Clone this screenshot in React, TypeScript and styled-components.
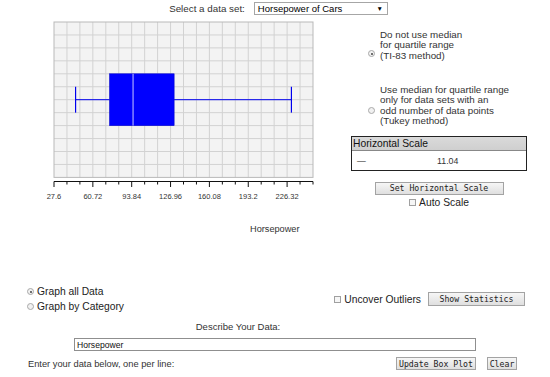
import styled, { createGlobalStyle } from 'styled-components';

const GlobalStyle = createGlobalStyle`
  body {
    margin: 0;
    background: #fff;
    color: #222;
    font-family: 'Liberation Sans', Arial, sans-serif;
  }
`;

const CELL = 12.95;
const COLS = 20;
const ROWS = 12;
const MIN = 27.6;
const STEP = 11.04;
const stats = { min: 46, q1: 75, median: 95, q3: 130, max: 230 };

const BoxPlot = () => {
  const x0 = 14;
  const y0 = 7;
  const w = COLS * CELL;
  const h = ROWS * CELL;
  const toX = (v: number) => x0 + ((v - MIN) / STEP) * CELL;
  const axisY = 166.5;
  const mid = y0 + 6 * CELL;
  const boxTop = y0 + 4 * CELL;
  const boxBottom = y0 + 8 * CELL;
  const capTop = y0 + 5 * CELL;
  const capBottom = y0 + 7 * CELL;

  return (
    <svg width="280" height="190" viewBox="0 0 280 190">
      <rect x={x0} y={y0} width={w} height={h} fill="#f3f3f3" />
      {Array.from({ length: COLS - 1 }, (_, i) => (
        <line key={'v' + i} x1={x0 + (i + 1) * CELL} x2={x0 + (i + 1) * CELL} y1={y0} y2={y0 + h} stroke="#d2d2d2" strokeWidth="1" />
      ))}
      {Array.from({ length: ROWS - 1 }, (_, i) => (
        <line key={'h' + i} x1={x0} x2={x0 + w} y1={y0 + (i + 1) * CELL} y2={y0 + (i + 1) * CELL} stroke="#d2d2d2" strokeWidth="1" />
      ))}
      <rect x={x0} y={y0} width={w} height={h} fill="none" stroke="#b9b9b9" strokeWidth="1" />

      <line x1={toX(stats.min)} x2={toX(stats.q1)} y1={mid} y2={mid} stroke="#0000ee" strokeWidth="1" />
      <line x1={toX(stats.q3)} x2={toX(stats.max)} y1={mid} y2={mid} stroke="#0000ee" strokeWidth="1" />
      <line x1={toX(stats.min)} x2={toX(stats.min)} y1={capTop} y2={capBottom} stroke="#0000ee" strokeWidth="1.2" />
      <line x1={toX(stats.max)} x2={toX(stats.max)} y1={capTop} y2={capBottom} stroke="#0000ee" strokeWidth="1.2" />
      <rect x={toX(stats.q1)} y={boxTop} width={toX(stats.q3) - toX(stats.q1)} height={boxBottom - boxTop} fill="#0000ff" stroke="#0000cc" strokeWidth="0.6" />
      <line x1={toX(stats.median)} x2={toX(stats.median)} y1={boxTop} y2={boxBottom} stroke="#c8c8ff" strokeWidth="1" />

      <line x1={x0} x2={x0 + w} y1={axisY} y2={axisY} stroke="#111" strokeWidth="1" />
      {Array.from({ length: COLS + 1 }, (_, i) => (
        <line key={'t' + i} x1={x0 + i * CELL} x2={x0 + i * CELL} y1={axisY} y2={axisY + (i % 3 === 0 ? 5.5 : 3)} stroke="#111" strokeWidth="1" />
      ))}
      {Array.from({ length: 7 }, (_, k) => (
        <text key={'l' + k} x={x0 + k * 3 * CELL} y={axisY + 17.5} fontSize="7.5" fill="#333" textAnchor="middle" fontFamily="'Liberation Sans', Arial, sans-serif">
          {parseFloat((MIN + k * 3 * STEP).toFixed(2)).toString()}
        </text>
      ))}
    </svg>
  );
};

const options = [
  { lines: ['Do not use median', 'for quartile range', '(TI-83 method)'], checked: true, mark: 20.5, gap: 0 },
  { lines: ['Use median for quartile range', 'only for data sets with an', 'odd number of data points', '(Tukey method)'], checked: false, mark: 22.5, gap: 23.5 },
];

const App = () => (
  <>
    <GlobalStyle />
    <Page>
      <TopBar>
        <span>Select a data set:</span>
        <Select>
          <span>Horsepower of Cars</span>
          <Arrow>▼</Arrow>
        </Select>
      </TopBar>

      <Main>
        <ChartColumn>
          <BoxPlot />
          <AxisTitle>Horsepower</AxisTitle>
        </ChartColumn>

        <SidePanel>
          <Options>
            {options.map((o) => (
              <OptionRow key={o.lines[0]} $gap={o.gap}>
                <RadioMark $checked={o.checked} $top={o.mark} />
                <OptionText>
                  {o.lines.map((l) => (
                    <div key={l}>{l}</div>
                  ))}
                </OptionText>
              </OptionRow>
            ))}
          </Options>

          <ScaleTable>
            <ScaleHead>Horizontal Scale</ScaleHead>
            <ScaleBody>
              <Dash>—</Dash>
              <ScaleValue>11.04</ScaleValue>
            </ScaleBody>
          </ScaleTable>

          <Button $w={129} $mt={10.5}>Set Horizontal Scale</Button>
          <CheckLabel $mt={2}>
            <CheckMark />
            Auto Scale
          </CheckLabel>
        </SidePanel>
      </Main>

      <ControlRow>
        <GraphModes>
          <ModeItem>
            <RadioMark $checked />
            Graph all Data
          </ModeItem>
          <ModeItem>
            <RadioMark $checked={false} />
            Graph by Category
          </ModeItem>
        </GraphModes>
        <OutlierGroup>
          <CheckLabel>
            <CheckMark />
            Uncover Outliers
          </CheckLabel>
          <Button $w={97}>Show Statistics</Button>
        </OutlierGroup>
      </ControlRow>

      <DescribeLabel>Describe Your Data:</DescribeLabel>
      <DescribeInput defaultValue="Horsepower" />

      <EntryRow>
        <span>Enter your data below, one per line:</span>
        <EntryButtons>
          <Button $w={80}>Update Box Plot</Button>
          <Button $w={30}>Clear</Button>
        </EntryButtons>
      </EntryRow>
    </Page>
  </>
);

const Page = styled.div`
  width: 550px;
  height: 377px;
  overflow: hidden;
  font-size: 10px;
`;

const TopBar = styled.div`
  display: flex;
  justify-content: center;
  align-items: center;
  gap: 9px;
  height: 15px;
  padding-top: 2px;
  margin-left: 7px;
  box-sizing: border-box;
  font-size: 9.8px;
  color: #333;
`;

const Select = styled.div`
  display: flex;
  justify-content: space-between;
  align-items: center;
  width: 134px;
  height: 13px;
  box-sizing: border-box;
  padding: 0 4px 0 3px;
  border: 1px solid #a6a6a6;
  font-size: 9.5px;
  color: #000;
`;

const Arrow = styled.span`
  font-size: 6.5px;
`;

const Main = styled.div`
  display: flex;
  height: 269.5px;
`;

const ChartColumn = styled.div`
  width: 300px;
  padding-left: 40px;
  display: flex;
  flex-direction: column;
`;

const AxisTitle = styled.div`
  margin-top: 19px;
  padding-left: 210px;
  font-size: 9.2px;
  line-height: 11px;
  color: #333;
`;

const SidePanel = styled.div`
  width: 176px;
  margin-left: 11px;
  display: flex;
  flex-direction: column;
  align-items: center;
`;

const Options = styled.div`
  align-self: stretch;
  padding: 14.75px 0 0 17px;
`;

const OptionRow = styled.div<{ $gap: number }>`
  display: flex;
  gap: 5px;
  margin-top: ${(p) => p.$gap}px;
`;

const RadioMark = styled.span<{ $checked: boolean; $top?: number }>`
  position: relative;
  flex: none;
  width: 7px;
  height: 7px;
  margin-top: ${(p) => p.$top ?? 0}px;
  box-sizing: border-box;
  border: 1px solid #a9a9a9;
  border-radius: 50%;
  background: #f1f1f1;

  &::after {
    content: '';
    display: ${(p) => (p.$checked ? 'block' : 'none')};
    position: absolute;
    left: 1.5px;
    top: 1.5px;
    width: 2px;
    height: 2px;
    border-radius: 50%;
    background: #444;
  }
`;

const OptionText = styled.div`
  font-size: 9.8px;
  line-height: 10.5px;
  color: #333;
`;

const ScaleTable = styled.div`
  align-self: stretch;
  margin-top: 9.25px;
  border: 1px solid #222;
`;

const ScaleHead = styled.div`
  height: 13px;
  line-height: 13px;
  padding-left: 1px;
  font-size: 10.3px;
  color: #111;
  background: linear-gradient(#dadada, #cfcfcf);
  border-bottom: 1px solid #888;
`;

const ScaleBody = styled.div`
  display: flex;
  align-items: center;
  height: 19px;
  font-size: 8.8px;
  color: #333;
`;

const Dash = styled.span`
  width: 80px;
  padding-left: 5px;
  color: #111;
`;

const ScaleValue = styled.span``;

const Button = styled.div<{ $w: number; $mt?: number }>`
  display: flex;
  justify-content: center;
  align-items: center;
  width: ${(p) => p.$w}px;
  height: 13.5px;
  margin-top: ${(p) => p.$mt ?? 0}px;
  box-sizing: border-box;
  border: 1px solid #a3a3a3;
  background: linear-gradient(#f6f6f6, #dfdfdf);
  font-family: 'DejaVu Sans Mono', 'Liberation Mono', monospace;
  font-size: 8.2px;
  color: #222;
`;

const CheckLabel = styled.div<{ $mt?: number }>`
  display: flex;
  align-items: center;
  gap: 3px;
  margin-top: ${(p) => p.$mt ?? 0}px;
  font-size: 10.3px;
  color: #222;
`;

const CheckMark = styled.span`
  width: 7px;
  height: 7px;
  box-sizing: border-box;
  border: 1px solid #a0a0a0;
  background: #f6f6f6;
`;

const ControlRow = styled.div`
  display: flex;
  align-items: center;
  padding: 0 25px 0 27px;
`;

const GraphModes = styled.div`
  display: flex;
  flex-direction: column;
`;

const ModeItem = styled.div`
  display: flex;
  align-items: center;
  gap: 3px;
  height: 14.5px;
  font-size: 10.3px;
  color: #222;
`;

const OutlierGroup = styled.div`
  display: flex;
  align-items: center;
  gap: 7px;
  margin-left: auto;
`;

const DescribeLabel = styled.div`
  margin-top: 7.5px;
  padding-right: 74px;
  text-align: center;
  font-size: 9.5px;
  line-height: 12px;
  color: #333;
`;

const DescribeInput = styled.input`
  display: block;
  width: 402px;
  height: 13px;
  margin: 5px 0 0 74px;
  padding: 0 2px;
  box-sizing: border-box;
  border: 1px solid #8f8f8f;
  font-family: 'Liberation Sans', Arial, sans-serif;
  font-size: 8.6px;
  color: #111;
  outline: none;
`;

const EntryRow = styled.div`
  display: flex;
  align-items: center;
  height: 15px;
  margin-top: 5px;
  padding: 0 33px 0 28px;
  font-size: 9.3px;
  color: #333;
`;

const EntryButtons = styled.div`
  display: flex;
  gap: 11px;
  margin-left: auto;
`;

export default App;
